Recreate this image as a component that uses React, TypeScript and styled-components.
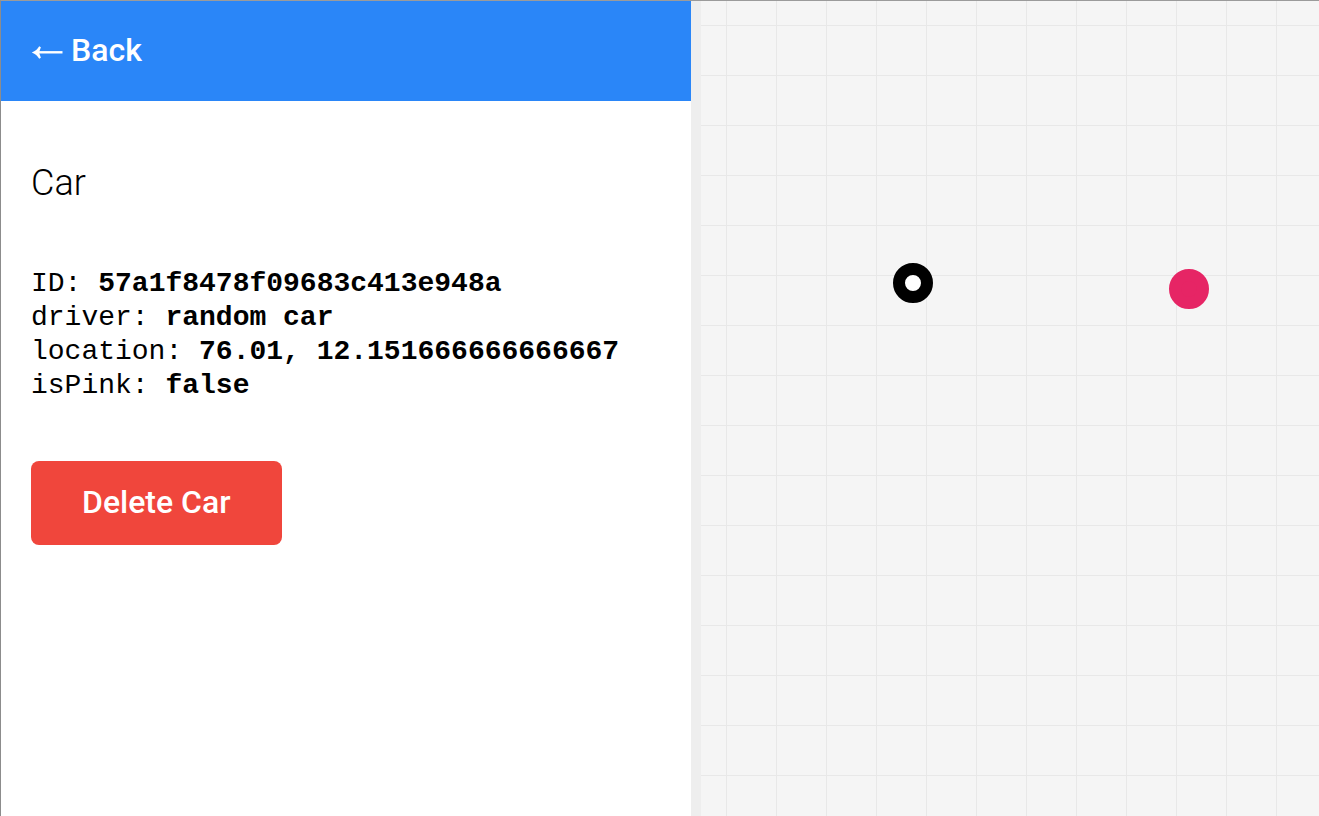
import React from "react";
import styled, { createGlobalStyle } from "styled-components";

const GlobalStyle = createGlobalStyle`
  *, *::before, *::after { box-sizing: border-box; }
  body {
    margin: 0;
    background: #fff;
    color: #000;
    font-family: Roboto, "Liberation Sans", sans-serif;
  }
`;

const Window = styled.div`
  display: flex;
  min-height: 100vh;
  border-top: 1px solid #9b9b9b;
  border-left: 1px solid #8c8c8c;
`;

const Sidebar = styled.aside`
  flex: 0 0 700px;
  border-right: 10px solid #eee;
  background: #fff;
`;

const Header = styled.header`
  display: flex;
  align-items: center;
  height: 100px;
  padding: 0 30px 2px;
  background: #2a86f8;
`;

const BackLink = styled.a`
  display: flex;
  align-items: center;
  gap: 8px;
  color: #fff;
  font-size: 32px;
  font-weight: 500;
  line-height: 38px;
  text-decoration: none;
`;

const Details = styled.main`
  padding: 60px 30px;
`;

const Title = styled.h1`
  margin: 0 0 62px;
  font-size: 36px;
  font-weight: 300;
  line-height: 44px;
`;

const Properties = styled.dl`
  margin: 0 0 58px;
  font-family: "Liberation Mono", monospace;
  font-size: 28px;
  line-height: 34px;
`;

const Property = styled.div`
  display: flex;
  white-space: pre;
`;

const Name = styled.dt``;

const Value = styled.dd`
  margin: 0;
  font-weight: 700;
`;

const DeleteButton = styled.button`
  height: 84px;
  padding: 0 51px 2px;
  border: 0;
  border-radius: 8px;
  background: #f0463c;
  color: #fff;
  font-family: inherit;
  font-size: 32px;
  font-weight: 500;
  cursor: pointer;
`;

const Map = styled.section`
  position: relative;
  flex: 1;
  overflow: hidden;
  background-color: #f5f5f5;
  background-image:
    linear-gradient(90deg, #e8e8e8 1px, transparent 1px),
    linear-gradient(#e8e8e8 1px, transparent 1px);
  background-size: 50px 50px;
  background-position: 25px 24px;
`;

const Pin = styled.div<{ $x: number; $y: number; $selected?: boolean }>`
  position: absolute;
  left: ${(p) => p.$x}px;
  top: ${(p) => p.$y}px;
  width: 40px;
  height: 40px;
  border: 12px solid ${(p) => (p.$selected ? "#000" : "#e62565")};
  border-radius: 50%;
  background: ${(p) => (p.$selected ? "#fff" : "#e62565")};
`;

const car = [
  ["ID", "57a1f8478f09683c413e948a"],
  ["driver", "random car"],
  ["location", "76.01, 12.151666666666667"],
  ["isPink", "false"],
];

export default function App() {
  return (
    <>
      <GlobalStyle />
      <Window>
        <Sidebar>
          <Header>
            <BackLink href="#">
              <svg width="32" height="20" viewBox="0 0 32 20" fill="none" aria-hidden="true">
                <path d="M4 12.300H31.500" stroke="#fff" strokeWidth="2.400" />
                <path d="M.8 12.500C4.500 11 6.400 9.200 8.200 6.300L9.900 7.200C9.200 9.300 8.600 11 8 12.500C8.600 14 9.200 15.700 9.900 17.800L8.200 18.700C6.400 15.800 4.500 14 .8 12.500Z" fill="#fff" />
              </svg>
              Back
            </BackLink>
          </Header>
          <Details>
            <Title>Car</Title>
            <Properties>
              {car.map(([name, value]) => (
                <Property key={name}>
                  <Name>{name}: </Name>
                  <Value>{value}</Value>
                </Property>
              ))}
            </Properties>
            <DeleteButton type="button">Delete Car</DeleteButton>
          </Details>
        </Sidebar>
        <Map aria-label="Car map">
          <Pin $x={192} $y={262} $selected />
          <Pin $x={468} $y={268} />
        </Map>
      </Window>
    </>
  );
}
